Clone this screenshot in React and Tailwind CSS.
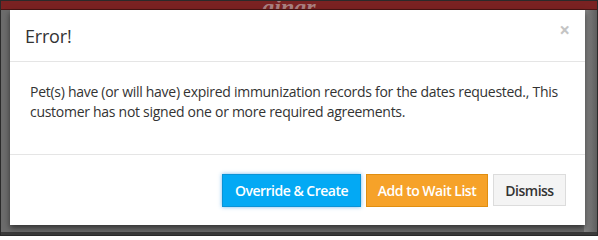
export default function App() {
  return (
    <div
      className="relative w-[598px] h-[236px] overflow-hidden bg-[#6c6c6c] border border-[#2a2a2a]"
      style={{ fontFamily: '"Open Sans", "Liberation Sans", sans-serif' }}
    >
      {/* page header behind the overlay */}
      <div className="h-[9px] bg-[#7a2222] border-b border-[#4a1414] overflow-hidden flex justify-center">
        <span className="-ml-[20px] -mt-[12px] text-[24px] italic font-bold text-[#a98080]" style={{ fontFamily: '"Liberation Serif", serif' }}>
          gingr
        </span>
      </div>
      <div className="absolute right-0 top-[9px] bottom-0 w-[13px] bg-gradient-to-r from-[#8a8a8a] to-[#5e5e5e]" />
      <div className="absolute left-0 right-0 bottom-0 h-[3px] bg-[#3a3a3a]" />

      {/* modal */}
      <div className="relative ml-[9px] w-[575px] bg-white shadow-[0_3px_6px_rgba(0,0,0,0.55)] text-[#333]">
        <div className="h-[52px] flex items-center justify-between pl-[15px] pr-[15px] border-b border-[#e5e5e5]">
          <h4 className="text-[18px] leading-none tracking-[-0.2px]">Error!</h4>
          <span className="-mt-[10px] text-[19px] font-bold leading-none text-[#c4c4c4]">×</span>
        </div>
        <div className="pt-[20px] pb-[32px] px-[20px] text-[14px] leading-[20px] tracking-[-0.28px]">
          Pet(s) have (or will have) expired immunization records for the dates requested., This customer has not signed one or more required agreements.
        </div>
        <div className="h-[71px] border-t border-[#e5e5e5] flex items-center justify-end gap-[5px] pr-[19px]">
          <button className="h-[33px] w-[139px] text-[14px] font-semibold tracking-[-0.5px] text-white bg-[#03a9f4] border border-[#0a93d6] shadow-[0_0_4px_rgba(102,175,233,0.9)]">
            Override &amp; Create
          </button>
          <button className="h-[33px] w-[122px] text-[14px] font-semibold tracking-[-0.5px] text-white bg-[#f6a229] border border-[#e08e10]">
            Add to Wait List
          </button>
          <button className="h-[32px] w-[73px] text-[14px] font-semibold tracking-[-0.5px] text-[#333] bg-[#f4f4f4] border border-[#dcdcdc]">
            Dismiss
          </button>
        </div>
      </div>
    </div>
  );
}
